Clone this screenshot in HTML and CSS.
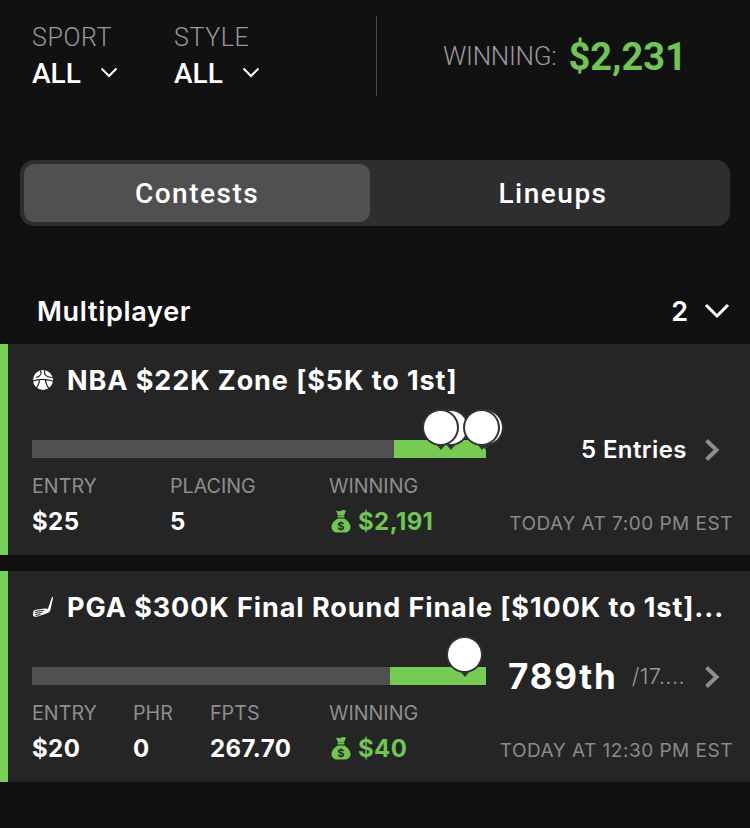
FILE: index.html
```html
<!DOCTYPE html>
<html lang="en">
<head>
  <meta charset="UTF-8">
  <meta name="viewport" content="width=device-width, initial-scale=1">
  <title>Contests</title>
  <link rel="stylesheet" href="styles.css">
</head>
<body>
  <header class="top-bar">
    <div class="filter filter-sport">
      <span class="filter-label">SPORT</span>
      <span class="filter-value">ALL
        <svg class="filter-chevron" viewBox="0 0 18 11"><path d="M1.5 1.5L9 9l7.5-7.5"/></svg>
      </span>
    </div>
    <div class="filter filter-style">
      <span class="filter-label">STYLE</span>
      <span class="filter-value">ALL
        <svg class="filter-chevron" viewBox="0 0 18 11"><path d="M1.5 1.5L9 9l7.5-7.5"/></svg>
      </span>
    </div>
    <div class="divider"></div>
    <div class="winning-total">
      <span class="winning-total-label">WINNING:</span>
      <span class="winning-total-value">$2,231</span>
    </div>
  </header>

  <div class="tabs">
    <button class="tab active">Contests</button>
    <button class="tab">Lineups</button>
  </div>

  <div class="section-head">
    <h2>Multiplayer</h2>
    <span class="section-count">2</span>
    <svg class="section-chevron" viewBox="0 0 26 16"><path d="M2 2l11 11L24 2"/></svg>
  </div>

  <section class="card">
    <h3 class="card-title">
      <svg class="sport-icon" viewBox="0 0 20 20">
        <circle cx="10" cy="10" r="10" fill="#fff"/>
        <path class="ball-lines" d="M0 11c6-2 13-2 20 0M7 .5C9 3 8.500 6 3 7.500M12 .3c-1.500 3 0 6.500 7.500 7.200M3.500 18c1.500-2.500 3-5 3-8M16 18.500c-2-2.500-3.500-5-3.500-9"/>
      </svg>
      NBA $22K Zone [$5K to 1st]
    </h3>
    <div class="progress-row">
      <div class="progress">
        <div class="progress-fill" style="width: 92px"></div>
        <span class="pin" style="left: 402px"></span>
        <span class="pin" style="left: 392px"></span>
        <span class="pin" style="left: 437px"></span>
        <span class="pin" style="left: 433px"></span>
      </div>
      <div class="entries">5 Entries</div>
      <svg class="row-chevron" viewBox="0 0 16 24"><path d="M2.500 2.500L12.500 12l-10 9.500"/></svg>
    </div>
    <div class="stats">
      <div class="stat stat-entry"><span class="stat-label">ENTRY</span><span class="stat-value">$25</span></div>
      <div class="stat stat-placing"><span class="stat-label">PLACING</span><span class="stat-value">5</span></div>
      <div class="stat">
        <span class="stat-label">WINNING</span>
        <span class="stat-value green">
          <svg class="bag" viewBox="0 0 20 24">
            <path d="M5 1.500c2 1 3.500 1 5 .2 1.500-.8 3.500-.8 5 0L13 6.500H7z"/>
            <rect x="6.500" y="6.800" width="7" height="1.800" rx=".9"/>
            <path d="M7 9.500h6c4 2 6.500 5.500 6.500 8.500 0 3.500-2.500 5.500-6 5.500h-7c-3.500 0-6-2-6-5.500 0-3 2.500-6.500 6.500-8.500z"/>
            <text class="bag-sign" x="10" y="21" text-anchor="middle">$</text>
          </svg>
          $2,191
        </span>
      </div>
      <div class="stat-time">TODAY AT 7:00 PM EST</div>
    </div>
  </section>

  <section class="card">
    <h3 class="card-title">
      <svg class="sport-icon" viewBox="0 0 20 20">
        <path d="M19 0h1.200L17.500 12.500c-.5 2-1.500 3-3 3.600-3 1.300-8 3-11 3.600-2 .3-3.500-.3-3.500-1.700 0-1.500.2-3 .7-4 .3-.7 1-1 2-1.200l9-1.300c1.500-.2 2.500 0 3.200.6z" fill="#fff"/>
        <path class="club-lines" d="M2 14.500l9-1.300M2 16.500l7.500-1.200M2.500 18.500l5-1"/>
      </svg>
      PGA $300K Final Round Finale [$100K to 1st]...
    </h3>
    <div class="progress-row">
      <div class="progress">
        <div class="progress-fill" style="width: 96px"></div>
        <span class="pin" style="left: 416px"></span>
      </div>
      <div class="rank">789th</div>
      <div class="rank-total">/17....</div>
      <svg class="row-chevron" viewBox="0 0 16 24"><path d="M2.500 2.500L12.500 12l-10 9.500"/></svg>
    </div>
    <div class="stats">
      <div class="stat stat-entry-short"><span class="stat-label">ENTRY</span><span class="stat-value">$20</span></div>
      <div class="stat stat-phr"><span class="stat-label">PHR</span><span class="stat-value">0</span></div>
      <div class="stat stat-fpts"><span class="stat-label">FPTS</span><span class="stat-value">267.70</span></div>
      <div class="stat">
        <span class="stat-label">WINNING</span>
        <span class="stat-value green">
          <svg class="bag" viewBox="0 0 20 24">
            <path d="M5 1.500c2 1 3.500 1 5 .2 1.500-.8 3.500-.8 5 0L13 6.500H7z"/>
            <rect x="6.500" y="6.800" width="7" height="1.800" rx=".9"/>
            <path d="M7 9.500h6c4 2 6.500 5.500 6.500 8.500 0 3.500-2.500 5.500-6 5.500h-7c-3.500 0-6-2-6-5.500 0-3 2.500-6.500 6.500-8.500z"/>
            <text class="bag-sign" x="10" y="21" text-anchor="middle">$</text>
          </svg>
          $40
        </span>
      </div>
      <div class="stat-time">TODAY AT 12:30 PM EST</div>
    </div>
  </section>
</body>
</html>
```

FILE: styles.css
```css
body {
  font-family: Inter, "Liberation Sans", sans-serif;
  background: #111112;
  color: #fff;
  margin: 0;
  padding: 0;
  height: 828px;
  overflow: hidden;
}
.top-bar {
  display: flex;
  height: 80px;
  padding: 16px 0 0 32px;
  font-family: Roboto, sans-serif;
}
.filter {
  display: flex;
  flex-direction: column;
  padding-top: 8px;
}
.filter-sport {
  width: 142px;
}
.filter-style {
  width: 202px;
}
.filter-label {
  font-size: 25px;
  font-weight: 300;
  line-height: 28px;
  letter-spacing: 0.6px;
  color: #9a9a9a;
}
.filter-value {
  display: flex;
  align-items: center;
  font-size: 28px;
  font-weight: 500;
  line-height: 32px;
  margin-top: 6px;
}
.filter-chevron {
  width: 18px;
  height: 11px;
  margin-left: 19px;
  margin-top: -3px;
  fill: none;
  stroke: #fff;
  stroke-width: 2;
}
.divider {
  width: 1px;
  height: 80px;
  background: #4a4a4a;
}
.winning-total {
  display: flex;
  align-items: center;
  height: 80px;
  margin-left: 66px;
}
.winning-total-label {
  font-size: 26px;
  font-weight: 300;
  color: #9a9a9a;
  letter-spacing: -0.3px;
}
.winning-total-value {
  font-size: 38px;
  font-weight: 700;
  color: #6fc653;
  margin: 2px 0 0 12px;
}
.tabs {
  display: flex;
  box-sizing: border-box;
  width: 710px;
  height: 66px;
  margin: 64px 0 0 20px;
  padding: 4px;
  background: #2e2e30;
  border-radius: 14px;
}
.tab {
  flex: 1;
  border: none;
  background: none;
  color: #fff;
  font-family: Roboto, sans-serif;
  font-size: 28px;
  font-weight: 500;
  letter-spacing: 1.5px;
  padding: 0 0 0 10px;
}
.tab.active {
  flex: 0 0 346px;
  padding: 0;
  background: #505051;
  border-radius: 10px;
}
.section-head {
  display: flex;
  align-items: center;
  height: 40px;
  margin-top: 65px;
  padding: 0 20px 0 37px;
}
.section-head h2 {
  flex: 1;
  margin: 0;
  font-size: 27px;
  font-weight: 600;
  letter-spacing: 0.7px;
}
.section-count {
  font-size: 27px;
  font-weight: 600;
}
.section-chevron {
  width: 26px;
  height: 16px;
  margin-left: 16px;
  fill: none;
  stroke: #fff;
  stroke-width: 3;
}
.card {
  box-sizing: border-box;
  height: 211px;
  margin-top: 13px;
  margin-bottom: 16px;
  padding: 20px 17px 0 24px;
  background: #252525;
  border-left: 8px solid #76d256;
}
.card-title {
  display: flex;
  align-items: center;
  height: 32px;
  margin: 0;
  font-size: 27px;
  font-weight: 700;
  white-space: nowrap;
  letter-spacing: 0.92px;
}
.sport-icon {
  flex: none;
  width: 20px;
  height: 20px;
  margin: 0 14px 0 1px;
}
.ball-lines {
  fill: none;
  stroke: #252525;
  stroke-width: 1.200;
}
.club-lines {
  fill: none;
  stroke: #252525;
  stroke-width: 1;
}
.progress-row {
  display: flex;
  align-items: center;
  height: 40px;
  margin-top: 33px;
}
.progress {
  position: relative;
  flex: none;
  width: 454px;
  height: 18px;
  background: #505051;
}
.progress-fill {
  position: absolute;
  top: 0;
  right: 0;
  height: 18px;
  background: #76cb52;
}
.pin {
  position: absolute;
  top: -29px;
  box-sizing: border-box;
  width: 33px;
  height: 33px;
  background: #fff;
  border-radius: 50%;
  box-shadow: 0 0 0 2px #333;
}
.pin::after {
  content: "";
  position: absolute;
  left: 12px;
  bottom: -6px;
  border-left: 5px solid transparent;
  border-right: 5px solid transparent;
  border-top: 6px solid #333;
}
.entries {
  flex: 1;
  margin-left: 95px;
  font-size: 24px;
  font-weight: 600;
  letter-spacing: 0.4px;
  white-space: nowrap;
}
.rank {
  margin-left: 22px;
  font-size: 35px;
  font-weight: 700;
  letter-spacing: 1.8px;
}
.rank-total {
  flex: 1;
  margin-left: 14px;
  font-size: 22px;
  font-weight: 300;
  letter-spacing: 0.4px;
  color: #9a9a9a;
  white-space: nowrap;
}
.row-chevron {
  flex: none;
  width: 16px;
  height: 24px;
  margin: 2px 13px 0 0;
  fill: none;
  stroke: #8e8e8e;
  stroke-width: 4;
}
.stats {
  display: flex;
  margin-top: 5px;
}
.stat {
  display: flex;
  flex-direction: column;
}
.stat-entry {
  width: 138px;
}
.stat-placing {
  width: 159px;
}
.stat-entry-short {
  width: 101px;
}
.stat-phr {
  width: 77px;
}
.stat-fpts {
  width: 119px;
}
.stat-label {
  font-size: 19.700px;
  line-height: 24px;
  color: #8e8e8e;
}
.stat-value {
  display: flex;
  align-items: center;
  height: 30px;
  margin-top: 8px;
  font-size: 24px;
  font-weight: 700;
  letter-spacing: 0.4px;
  white-space: nowrap;
}
.green {
  color: #6fc653;
}
.bag {
  width: 20px;
  height: 24px;
  margin: 0 7px 0 2px;
  fill: #6fc653;
}
.bag-sign {
  font-family: Inter, sans-serif;
  font-size: 11px;
  font-weight: 700;
  fill: #252525;
}
.stat-time {
  align-self: flex-end;
  margin-left: auto;
  font-size: 19px;
  line-height: 24px;
  letter-spacing: 0.5px;
  color: #8a8a8a;
  white-space: nowrap;
}
```
